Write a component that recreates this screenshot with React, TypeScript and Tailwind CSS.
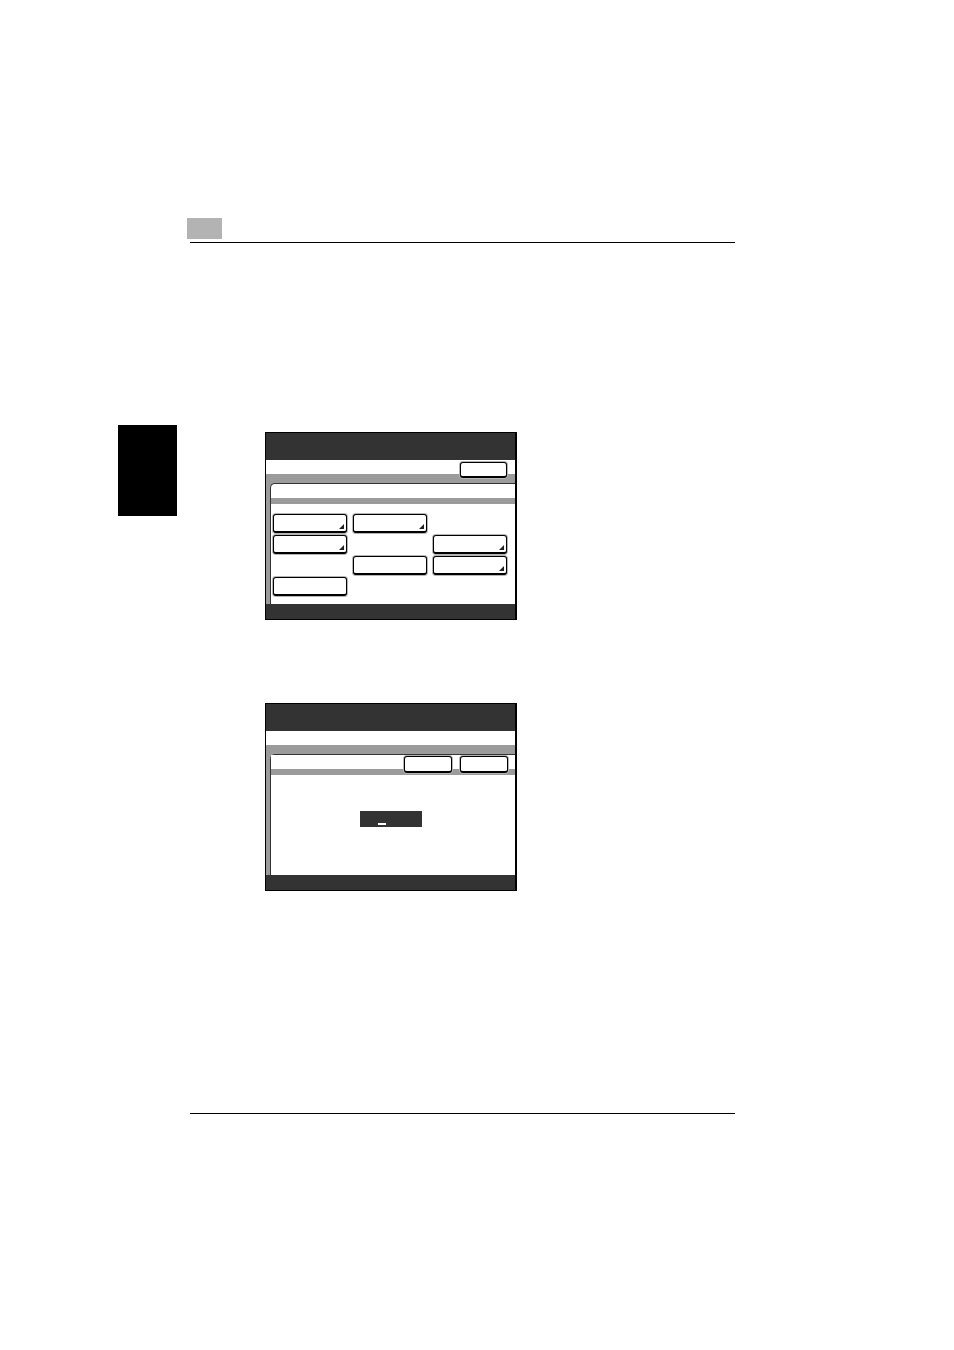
import React from 'react';

function Key({ w = 'w-[74px]', h = 'h-[19px]', mark = false }: { w?: string; h?: string; mark?: boolean }) {
  return (
    <div
      className={`relative ${w} ${h} rounded-[3px] border border-black border-b-2 bg-white shadow-[0_0_0_1px_#b5b5b5]`}
    >
      {mark && (
        <svg className="absolute right-[2px] bottom-[2px]" width="5" height="5" viewBox="0 0 5 5">
          <polygon points="5,0 5,5 0,5" fill="#222" />
        </svg>
      )}
    </div>
  );
}

function MenuScreen() {
  return (
    <div className="w-[252px] h-[188px] border border-black border-r-2 flex flex-col bg-white">
      <div className="h-[27px] bg-[#333]" />
      <div className="h-[23px] flex justify-end items-start pt-[2px] pr-[8px] bg-[linear-gradient(to_bottom,white_14px,#9b9b9b_14px)]">
        <Key w="w-[47px]" h="h-[16px]" />
      </div>
      <div className="flex-1 flex bg-[#9b9b9b] pl-[4px]">
        <div className="flex-1 bg-white rounded-tl-[5px] border-t border-l border-[#333] pt-[14px]">
          <div className="h-[6px] bg-[#9b9b9b]" />
          <div className="mt-[10px] pl-[2px] grid grid-cols-[74px_74px_74px] gap-x-[6px] gap-y-[2px]">
            <Key mark />
            <Key mark />
            <div />
            <Key mark />
            <div />
            <Key mark />
            <div />
            <Key />
            <Key mark />
            <Key />
          </div>
        </div>
      </div>
      <div className="h-[15px] bg-[#333]" />
    </div>
  );
}

function InputScreen() {
  return (
    <div className="w-[252px] h-[188px] border border-black border-r-2 flex flex-col bg-white">
      <div className="h-[27px] bg-[#333]" />
      <div className="h-[14px] bg-white" />
      <div className="h-[9px] bg-[#9b9b9b]" />
      <div className="flex-1 flex bg-[#9b9b9b] pl-[4px]">
        <div className="flex-1 flex flex-col bg-white rounded-tl-[5px] border-t border-l border-[#333]">
          <div className="h-[21px] flex justify-end items-start gap-[8px] pt-[1px] pr-[7px] bg-[linear-gradient(to_bottom,white_14px,#9b9b9b_14px,#9b9b9b_20px,white_20px)]">
            <Key w="w-[48px]" h="h-[17px]" />
            <Key w="w-[48px]" h="h-[17px]" />
          </div>
          <div className="mt-[35px] flex pl-[89px]">
            <div className="w-[62px] h-[16px] bg-[#333] pl-[18px] pt-[12px]">
              <div className="w-[8px] h-[2px] bg-white" />
            </div>
          </div>
        </div>
      </div>
      <div className="h-[15px] bg-[#333]" />
    </div>
  );
}

export default function App() {
  return (
    <div className="w-[954px] h-[1350px] bg-white overflow-hidden font-['Liberation_Sans',sans-serif]">
      <div className="pt-[218px] pl-[187px]">
        <div className="w-[35px] h-[21px] bg-[#b3b3b3]" />
      </div>
      <div className="ml-[190px] mt-[3px] w-[545px] h-px bg-black" />

      <div className="mt-[182px] flex items-start">
        <div className="ml-[118px] w-[59px] h-[91px] bg-black" />
        <div className="ml-[88px] mt-[7px] flex flex-col gap-[83px]">
          <MenuScreen />
          <InputScreen />
        </div>
      </div>

      <div className="ml-[190px] mt-[222px] w-[545px] h-px bg-black" />
    </div>
  );
}
